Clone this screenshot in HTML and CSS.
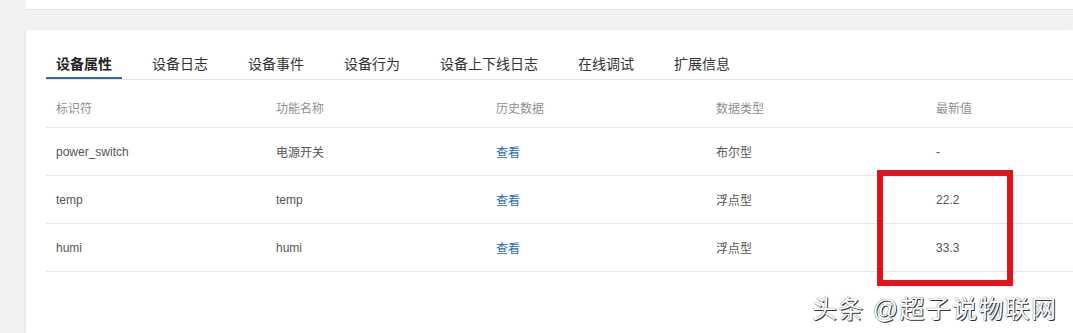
FILE: index.html
```html
<!DOCTYPE html>
<html lang="zh-CN">
<head>
    <meta charset="UTF-8">
    <meta name="viewport" content="width=device-width, initial-scale=1.0">
    <title>设备详情</title>
    <link rel="stylesheet" href="styles.css">
</head>
<body>
    <div class="top-card"></div>

    <section class="detail-card">
        <ul class="tabs">
            <li class="tab active">设备属性</li>
            <li class="tab">设备日志</li>
            <li class="tab">设备事件</li>
            <li class="tab">设备行为</li>
            <li class="tab">设备上下线日志</li>
            <li class="tab">在线调试</li>
            <li class="tab">扩展信息</li>
        </ul>

        <table class="prop-table">
            <colgroup>
                <col class="col">
                <col class="col">
                <col class="col">
                <col class="col">
                <col>
            </colgroup>
            <thead>
                <tr>
                    <th>标识符</th>
                    <th>功能名称</th>
                    <th>历史数据</th>
                    <th>数据类型</th>
                    <th>最新值</th>
                </tr>
            </thead>
            <tbody>
                <tr>
                    <td>power_switch</td>
                    <td>电源开关</td>
                    <td><a class="link">查看</a></td>
                    <td>布尔型</td>
                    <td>-</td>
                </tr>
                <tr>
                    <td>temp</td>
                    <td>temp</td>
                    <td><a class="link">查看</a></td>
                    <td>浮点型</td>
                    <td>22.2</td>
                </tr>
                <tr>
                    <td>humi</td>
                    <td>humi</td>
                    <td><a class="link">查看</a></td>
                    <td>浮点型</td>
                    <td>33.3</td>
                </tr>
            </tbody>
        </table>

        <div class="mark-box"></div>
    </section>

    <div class="watermark">头条 @超子说物联网</div>
</body>
</html>
```

FILE: styles.css
```css
html, body {
    overflow: hidden;
}
body {
    font-family: "Liberation Sans", "Noto Sans CJK SC", sans-serif;
    background-color: #f2f2f2;
    color: #333;
    margin: 0;
    padding: 0;
    height: 333px;
    position: relative;
}
.top-card {
    margin-left: 26px;
    height: 9px;
    background: white;
    border-bottom: 1px solid #e2e2e2;
}
.detail-card {
    position: relative;
    margin: 20px 0 0 26px;
    padding: 22px 0 0 20px;
    height: 281px;
    background: white;
    box-shadow: -1px 0 2px rgba(0, 0, 0, 0.06);
    overflow: hidden;
}
.tabs {
    display: flex;
    list-style: none;
    margin: 0;
    padding: 0;
    border-bottom: 1px solid #e4e4e4;
}
.tab {
    padding: 0 10px;
    margin-right: 20px;
    font-size: 14px;
    line-height: 25px;
    color: #333;
    border-bottom: 2px solid transparent;
}
.tab.active {
    border-bottom-color: #2a68b0;
    color: #222;
    font-weight: bold;
}
.prop-table {
    margin-top: 8px;
    border-collapse: collapse;
    table-layout: fixed;
    width: 100%;
    font-size: 12px;
}
.prop-table .col {
    width: 220px;
}
.prop-table th, .prop-table td {
    text-align: left;
    padding: 0 0 0 10px;
    border-bottom: 1px solid #e6e6e6;
}
.prop-table th {
    height: 39px;
    color: #8f8f8f;
    font-weight: normal;
}
.prop-table td {
    height: 47px;
    color: #555;
}
.link {
    color: #1f6cb0;
    cursor: pointer;
}
.mark-box {
    position: absolute;
    left: 851px;
    top: 140px;
    width: 136px;
    height: 116px;
    box-sizing: border-box;
    border: 6px solid #e1141b;
}
.watermark {
    position: absolute;
    left: 812px;
    top: 289px;
    font-size: 25px;
    letter-spacing: 1.3px;
    color: #fff;
    text-shadow: 1px 1px 0 #333, 0 0 1px #333;
    white-space: nowrap;
}
```
